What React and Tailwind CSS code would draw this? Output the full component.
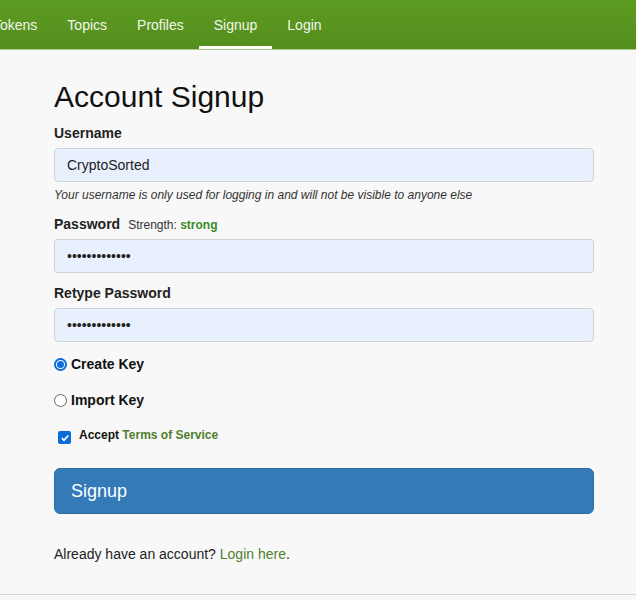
import React from "react";

export default function App() {
  const navItems = ["Tokens", "Topics", "Profiles", "Signup", "Login"];
  return (
    <div className="min-h-[600px] bg-[#f8f8f8] overflow-hidden" style={{ fontFamily: '"Liberation Sans", Arial, sans-serif' }}>
      <nav className="h-[50px] bg-gradient-to-b from-[#5c9b21] to-[#558e1e] border-b border-[#a9c98a] flex overflow-hidden">
        <div className="flex -ml-[22px]">
          {navItems.map((n) => (
            <a
              key={n}
              className={
                "px-[15px] h-[49px] flex items-center text-[14px] text-[#f2f7ec] " +
                (n === "Signup" ? "border-b-[3px] border-white pt-[5px]" : "pt-[2px]")
              }
            >
              {n}
            </a>
          ))}
        </div>
      </nav>
      <div className="px-[54px] pt-[30px] pb-[29px] border-b border-[#d6d6d6] w-[648px]">
        <h1 className="text-[30px] leading-[34px] text-[#111] mb-[11px]">Account Signup</h1>
        <label className="block text-[14px] font-bold text-[#222] leading-[16px] mb-[7px]">Username</label>
        <div className="w-[540px] h-[34px] bg-[#e8f0fe] border border-[#cfd3d8] rounded-[4px] flex items-center px-[12px] text-[14px] text-[#222]">
          CryptoSorted
        </div>
        <p className="text-[12px] italic text-[#333] mt-[6px] leading-[14px]">
          Your username is only used for logging in and will not be visible to anyone else
        </p>
        <div className="mt-[14px] flex items-baseline leading-[16px] mb-[6px]">
          <span className="text-[14px] font-bold text-[#222]">Password</span>
          <span className="text-[12px] text-[#333] ml-[8px]">
            Strength: <span className="font-bold text-[#3c8a2a]">strong</span>
          </span>
        </div>
        <div className="w-[540px] h-[34px] bg-[#e8f0fe] border border-[#cfd3d8] rounded-[4px] flex items-center px-[12px] text-[14px] text-[#222]">
          •••••••••••••
        </div>
        <label className="block mt-[12px] text-[14px] font-bold text-[#222] leading-[16px] mb-[7px]">Retype Password</label>
        <div className="w-[540px] h-[34px] bg-[#e8f0fe] border border-[#cfd3d8] rounded-[4px] flex items-center px-[12px] text-[14px] text-[#222]">
          •••••••••••••
        </div>
        <div className="mt-[14px] flex items-center h-[16px]">
          <span className="w-[13px] h-[13px] rounded-full border-2 border-[#0b6bd8] flex items-center justify-center bg-white">
            <span className="w-[7px] h-[7px] rounded-full bg-[#0b6bd8]" />
          </span>
          <span className="ml-[4px] text-[14px] font-bold text-[#111]">Create Key</span>
        </div>
        <div className="mt-[20px] flex items-center h-[16px]">
          <span className="w-[13px] h-[13px] rounded-full border border-[#666] bg-white" />
          <span className="ml-[4px] text-[14px] font-bold text-[#111]">Import Key</span>
        </div>
        <div className="mt-[20px] flex items-center h-[16px] pl-[4px]">
          <span className="w-[13px] h-[13px] rounded-[2px] bg-[#0b6bd8] flex items-center justify-center mt-[3px]">
            <svg width="10" height="10" viewBox="0 0 10 10">
              <path d="M1.8 5.2 L4 7.3 L8.3 2.5" stroke="white" strokeWidth="1.8" fill="none" />
            </svg>
          </span>
          <span className="ml-[8px] text-[12px] font-bold text-[#111] -mt-[2px]">
            Accept <span className="text-[#4f7f2c]">Terms of Service</span>
          </span>
        </div>
        <button className="mt-[24px] w-[540px] h-[46px] bg-[#337ab7] border border-[#2e6da4] rounded-[6px] text-white text-[18px] text-left px-[16px]">
          Signup
        </button>
        <p className="mt-[30px] text-[14px] text-[#222]">
          Already have an account? <span className="text-[#4f7f2c]">Login here</span>.
        </p>
      </div>
    </div>
  );
}
